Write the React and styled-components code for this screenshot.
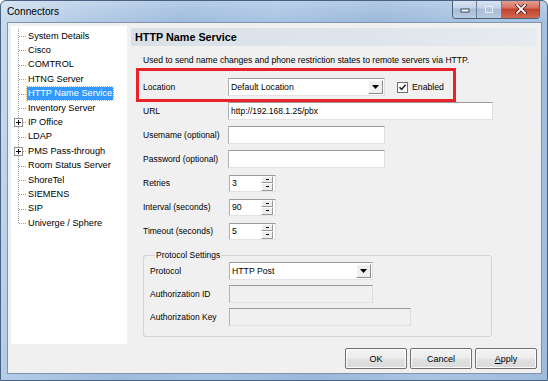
import React from 'react';
import styled, { createGlobalStyle } from 'styled-components';

const GlobalStyle = createGlobalStyle`
  html, body { margin: 0; padding: 0; background: #fff; }
  * { box-sizing: border-box; }
`;

const treeItems = [
    { label: 'System Details' },
    { label: 'Cisco' },
    { label: 'COMTROL' },
    { label: 'HTNG Server' },
    { label: 'HTTP Name Service', selected: true },
    { label: 'Inventory Server' },
    { label: 'IP Office', expandable: true },
    { label: 'LDAP' },
    { label: 'PMS Pass-through', expandable: true },
    { label: 'Room Status Server' },
    { label: 'ShoreTel' },
    { label: 'SIEMENS' },
    { label: 'SIP' },
    { label: 'Univerge / Sphere' },
];

function TreeLines({ last, expandable }) {
    return (
        <svg width="16" height="14.4" viewBox="0 0 16 14.4">
            <line x1="7.5" y1="0" x2="7.5" y2={last ? 7.2 : 14.4} stroke="#a0a0a0" strokeDasharray="1 1" />
            <line x1="8" y1="7.5" x2="16" y2="7.5" stroke="#a0a0a0" strokeDasharray="1 1" />
            {expandable && (
                <g>
                    <rect x="3.5" y="3.5" width="8" height="8" fill="#fff" stroke="#919191" />
                    <line x1="5" y1="7.5" x2="10" y2="7.5" stroke="#000" />
                    <line x1="7.5" y1="5" x2="7.5" y2="10" stroke="#000" />
                </g>
            )}
        </svg>
    );
}

function ComboArrow() {
    return (
        <svg width="7" height="4" viewBox="0 0 7 4">
            <path d="M0 0 H7 L3.5 4 Z" fill="#000" />
        </svg>
    );
}

function CheckMark() {
    return (
        <svg width="9" height="9" viewBox="0 0 9 9">
            <path d="M1.5 4.2 L3.6 6.4 L7.6 1.8" fill="none" stroke="#222" strokeWidth="1.6" />
        </svg>
    );
}

function CaptionIcon({ kind }) {
    if (kind === 'min') {
        return (
            <svg width="10" height="8" viewBox="0 0 10 8">
                <rect x="1" y="4" width="8" height="3" fill="#fff" stroke="#3b4a5e" strokeWidth="1" />
            </svg>
        );
    }
    if (kind === 'max') {
        return (
            <svg width="10" height="9" viewBox="0 0 10 9">
                <rect x="1.5" y="1.5" width="7" height="6" fill="none" stroke="#e8eef6" strokeWidth="1" />
                <rect x="3" y="3" width="4" height="3" fill="none" stroke="#b9c8da" strokeWidth="1" />
            </svg>
        );
    }
    return (
        <svg width="12" height="10" viewBox="0 0 12 10">
            <path d="M2 1 L10 9 M10 1 L2 9" stroke="#3a1010" strokeWidth="3.2" strokeLinecap="square" />
            <path d="M2 1 L10 9 M10 1 L2 9" stroke="#fff" strokeWidth="1.8" strokeLinecap="square" />
        </svg>
    );
}

export default function App() {
    return (
        <>
            <GlobalStyle />
            <Win>
                <TitleBar>
                    <Title>Connectors</Title>
                    <CaptionGroup>
                        <CaptionButton $w={24}><CaptionIcon kind="min" /></CaptionButton>
                        <CaptionButton $w={25}><CaptionIcon kind="max" /></CaptionButton>
                        <CloseButton><CaptionIcon kind="close" /></CloseButton>
                    </CaptionGroup>
                </TitleBar>
                <Client>
                    <Body>
                        <Tree>
                            {treeItems.map((item, i) => (
                                <TreeRow key={item.label}>
                                    <TreeLines last={i === treeItems.length - 1} expandable={item.expandable} />
                                    <TreeLabel $selected={item.selected}>{item.label}</TreeLabel>
                                </TreeRow>
                            ))}
                        </Tree>
                        <Panel>
                            <PanelHeader>HTTP Name Service</PanelHeader>
                            <Description>
                                Used to send name changes and phone restriction states to remote servers via HTTP.
                            </Description>
                            <Form>
                                <FormRow>
                                    <Label>Location</Label>
                                    <Combo $w={157}>
                                        <ComboText>Default Location</ComboText>
                                        <ComboButton><ComboArrow /></ComboButton>
                                    </Combo>
                                    <CheckWrap>
                                        <CheckBox><CheckMark /></CheckBox>
                                        Enabled
                                    </CheckWrap>
                                </FormRow>
                                <FormRow>
                                    <Label>URL</Label>
                                    <TextBox $w={265}>http://192.168.1.25/pbx</TextBox>
                                </FormRow>
                                <FormRow>
                                    <Label>Usemame (optional)</Label>
                                    <TextBox $w={157} />
                                </FormRow>
                                <FormRow>
                                    <Label>Password (optional)</Label>
                                    <TextBox $w={157} />
                                </FormRow>
                                {[['Retries', '3'], ['Interval (seconds)', '90'], ['Timeout (seconds)', '5']].map(([l, v]) => (
                                    <FormRow key={l}>
                                        <Label>{l}</Label>
                                        <Spin>
                                            <SpinText>{v}</SpinText>
                                            <SpinButtons>
                                                <SpinButton><SpinDot /></SpinButton>
                                                <SpinButton><SpinDot /></SpinButton>
                                            </SpinButtons>
                                        </Spin>
                                    </FormRow>
                                ))}
                            </Form>
                            <Group>
                                <Legend>Protocol Settings</Legend>
                                <GroupRow>
                                    <GroupLabel>Protocol</GroupLabel>
                                    <Combo $w={144}>
                                        <ComboText>HTTP Post</ComboText>
                                        <ComboButton><ComboArrow /></ComboButton>
                                    </Combo>
                                </GroupRow>
                                <GroupRow>
                                    <GroupLabel>Authorization ID</GroupLabel>
                                    <TextBox $w={144} $disabled />
                                </GroupRow>
                                <GroupRow>
                                    <GroupLabel>Authorization Key</GroupLabel>
                                    <TextBox $w={182} $disabled />
                                </GroupRow>
                            </Group>
                            <Highlight />
                        </Panel>
                    </Body>
                    <Footer>
                        <Button>OK</Button>
                        <Button>Cancel</Button>
                        <Button><u>A</u>pply</Button>
                    </Footer>
                </Client>
            </Win>
        </>
    );
}

const Win = styled.div`
  width: 548px;
  height: 381px;
  border: 1px solid #4a6282;
  border-radius: 6px 6px 0 0;
  background:
    linear-gradient(to bottom, rgba(255,255,255,0.25), rgba(255,255,255,0) 22px),
    linear-gradient(100deg, #c9dcef 0%, #b3cbe6 12%, #9ebbdd 30%, #a6c2e2 45%, #9ab7da 62%, #a9c4e2 80%, #9fbbdc 100%);
  display: flex;
  flex-direction: column;
  font-family: "Liberation Sans", Arial, sans-serif;
  overflow: hidden;
`;

const TitleBar = styled.div`
  height: 21px;
  display: flex;
  align-items: flex-start;
  padding-left: 6px;
`;

const Title = styled.div`
  font-size: 10.2px;
  line-height: 21px;
  color: #000;
`;

const CaptionGroup = styled.div`
  margin-left: auto;
  margin-right: 7px;
  margin-top: -1px;
  display: flex;
  height: 19px;
  border: 1px solid #4d6078;
  border-top: none;
  border-radius: 0 0 4px 4px;
  overflow: hidden;
`;

const CaptionButton = styled.div`
  width: ${(p) => p.$w}px;
  height: 100%;
  display: flex;
  align-items: center;
  justify-content: center;
  background: linear-gradient(to bottom, #dbe6f3 0%, #c3d3e7 45%, #aabdd6 50%, #b9cbe1 100%);
  border-right: 1px solid #6d7f98;
`;

const CloseButton = styled.div`
  width: 37px;
  height: 100%;
  display: flex;
  align-items: center;
  justify-content: center;
  background: linear-gradient(to bottom, #e8a397 0%, #d7705f 45%, #c2402c 50%, #d26a4f 100%);
`;

const Client = styled.div`
  margin-left: 6px;
  width: 535px;
  height: 352px;
  background: #f0f0f0;
  border: 1px solid #7f93ab;
  display: flex;
  flex-direction: column;
`;

const Body = styled.div`
  flex: 1;
  display: flex;
  padding: 3px 0 0 3px;
  min-height: 0;
`;

const Tree = styled.div`
  width: 116px;
  height: 318px;
  background: #fff;
  padding-top: 3px;
  flex-shrink: 0;
`;

const TreeRow = styled.div`
  height: 14.4px;
  display: flex;
  align-items: center;
  svg { flex-shrink: 0; display: block; }
`;

const TreeLabel = styled.span`
  font-size: 9.2px;
  line-height: 13px;
  padding: 0 1px;
  white-space: nowrap;
  color: ${(p) => (p.$selected ? '#fff' : '#000')};
  background: ${(p) => (p.$selected ? '#3399ff' : 'transparent')};
  outline: ${(p) => (p.$selected ? '1px dotted #f3b045' : 'none')};
`;

const Panel = styled.div`
  position: relative;
  margin-left: 4px;
  margin-top: 2px;
  width: 406px;
  display: flex;
  flex-direction: column;
`;

const PanelHeader = styled.div`
  height: 18px;
  padding-left: 4px;
  font-size: 10.8px;
  font-weight: bold;
  line-height: 18px;
  color: #000;
  background: linear-gradient(to right, #d9e0e8, #dfe5ec 60%, #e8ecf0);
`;

const Description = styled.div`
  margin-top: 7px;
  padding-left: 12px;
  font-size: 8.6px;
  line-height: 14px;
  color: #000;
`;

const Form = styled.div`
  margin-top: 11px;
  padding-left: 12px;
  display: flex;
  flex-direction: column;
  gap: 6px;
`;

const FormRow = styled.div`
  height: 18px;
  display: flex;
  align-items: center;
`;

const Label = styled.div`
  width: 85px;
  font-size: 8.5px;
  color: #000;
  flex-shrink: 0;
`;

const TextBox = styled.div`
  width: ${(p) => p.$w}px;
  height: 18px;
  border: 1px solid;
  border-color: #9a9a9a #dedede #e3e3e3 #b2b2b2;
  background: ${(p) => (p.$disabled ? '#f0f0f0' : '#fff')};
  font-size: 8.5px;
  line-height: 16px;
  padding-left: 2px;
  color: #000;
`;

const Combo = styled.div`
  width: ${(p) => p.$w}px;
  height: 18px;
  border: 1px solid;
  border-color: #9a9a9a #dedede #e3e3e3 #b2b2b2;
  background: #fff;
  display: flex;
  align-items: stretch;
`;

const ComboText = styled.div`
  flex: 1;
  font-size: 8.7px;
  line-height: 16px;
  padding-left: 2px;
  color: #000;
`;

const ComboButton = styled.div`
  width: 15px;
  margin: 1px;
  display: flex;
  align-items: center;
  justify-content: center;
  background: #f0f0f0;
  border: 1px solid;
  border-color: #fff #8a8a8a #8a8a8a #fff;
`;

const CheckWrap = styled.label`
  margin-left: 12px;
  display: flex;
  align-items: center;
  gap: 4px;
  font-size: 8.7px;
  color: #000;
`;

const CheckBox = styled.span`
  width: 11px;
  height: 11px;
  border: 1px solid #707070;
  background: #fff;
  display: flex;
  align-items: center;
  justify-content: center;
`;

const Spin = styled.div`
  width: 47px;
  height: 17px;
  border: 1px solid;
  border-color: #9a9a9a #dedede #e3e3e3 #b2b2b2;
  background: #fff;
  display: flex;
  margin-left: 1px;
`;

const SpinText = styled.div`
  flex: 1;
  font-size: 8.7px;
  line-height: 15px;
  padding-left: 2px;
`;

const SpinButtons = styled.div`
  width: 12px;
  margin: 0 2px 0 0;
  display: flex;
  flex-direction: column;
`;

const SpinButton = styled.div`
  flex: 1;
  display: flex;
  align-items: center;
  justify-content: center;
  background: #ececec;
  border: 1px solid;
  border-color: #fff #999 #999 #fff;
`;

const SpinDot = styled.span`
  width: 3px;
  height: 1px;
  background: #000;
`;

const Group = styled.fieldset`
  margin: 10px 0 0 12px;
  width: 349px;
  height: 87px;
  padding: 2px 0 0 6px;
  border: 1px solid #d0d5d9;
  border-radius: 3px;
  display: flex;
  flex-direction: column;
  gap: 5px;
`;

const Legend = styled.legend`
  font-size: 8.5px;
  color: #000;
  padding: 0 1px;
  margin-left: 5px;
`;

const GroupRow = styled.div`
  height: 18px;
  display: flex;
  align-items: center;
`;

const GroupLabel = styled.div`
  width: 79px;
  font-size: 8.5px;
  color: #000;
  flex-shrink: 0;
`;

const Highlight = styled.div`
  position: absolute;
  left: 5px;
  top: 40px;
  width: 320px;
  height: 34px;
  border: 3px solid #e8212b;
  pointer-events: none;
`;

const Footer = styled.div`
  display: flex;
  justify-content: flex-end;
  gap: 3px;
  padding: 0 4px 4px 0;
`;

const Button = styled.div`
  width: 62px;
  height: 21px;
  border: 1px solid #707070;
  border-radius: 2px;
  background: linear-gradient(to bottom, #f4f4f4 0%, #ececec 48%, #e2e2e2 52%, #d9d9d9 100%);
  box-shadow: inset 0 0 0 1px #fcfcfc;
  display: flex;
  align-items: center;
  justify-content: center;
  font-size: 9px;
  color: #000;
  u { text-decoration: underline; }
`;
